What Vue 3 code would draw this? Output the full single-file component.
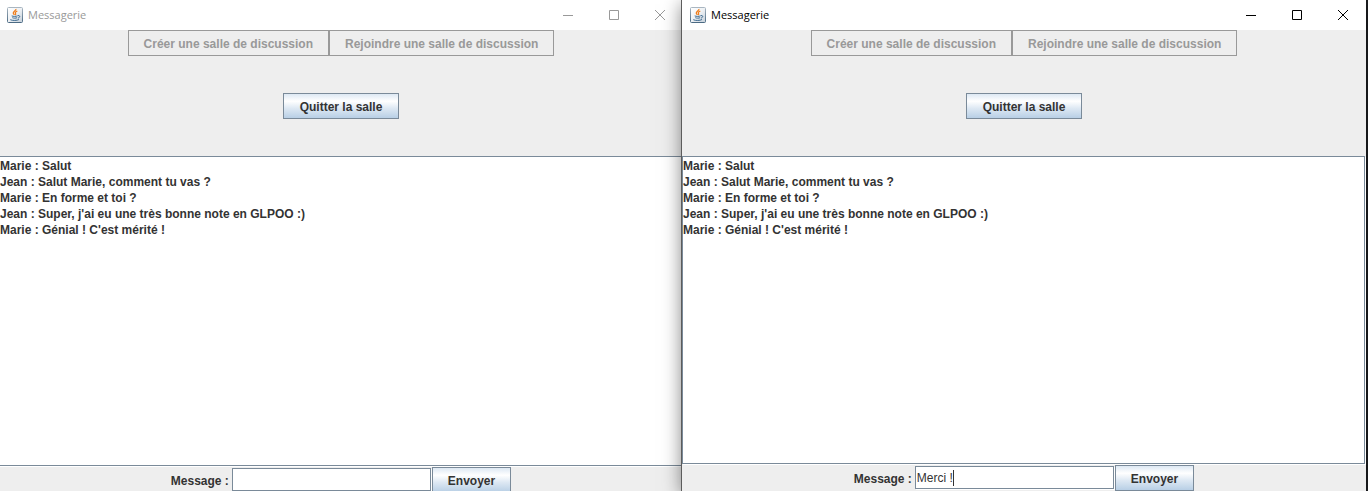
<script setup>
import { reactive } from 'vue'

const messages = [
  'Marie : Salut',
  'Jean : Salut Marie, comment tu vas ?',
  'Marie : En forme et toi ?',
  "Jean : Super, j'ai eu une très bonne note en GLPOO :)",
  "Marie : Génial ! C'est mérité !",
]

const windows = reactive([
  { id: 'jean', active: false, draft: '' },
  { id: 'marie', active: true, draft: 'Merci !' },
])
</script>

<template>
  <main class="desktop">
    <section
      v-for="w in windows"
      :key="w.id"
      class="window"
      :class="w.active ? 'active' : 'inactive'"
    >
      <header class="titlebar">
        <svg class="logo" viewBox="0 0 16 16" aria-hidden="true">
          <defs>
            <linearGradient :id="'tile-' + w.id" x1="0" y1="0" x2="1" y2="1">
              <stop offset="0" stop-color="#ffffff" />
              <stop offset="0.5" stop-color="#eef1f4" />
              <stop offset="1" stop-color="#c3ced8" />
            </linearGradient>
            <linearGradient :id="'edge-' + w.id" x1="0" y1="0" x2="0" y2="1">
              <stop offset="0" stop-color="#a9b6c1" />
              <stop offset="1" stop-color="#4b6a83" />
            </linearGradient>
          </defs>
          <rect x="0.5" y="0.5" width="15" height="15" rx="1" :fill="`url(#tile-${w.id})`" :stroke="`url(#edge-${w.id})`" />
          <path d="M8.900 2c.6 1.600-3 2.500-2.600 4.200.1.700 1 1.200 1 1.900M10.300 4.200c-1.500.5-2.400 1.200-1.800 2.200.5.700.2 1.300-.3 1.700" fill="none" stroke="#f07d1a" stroke-width="1.300" />
          <path d="M4.700 8.900c1.500.700 4.500.600 5.800 0M5.300 10.700c1.300.6 3.600.6 4.800 0M3.300 12.700c2.200 1.100 6.700 1 8.700-.2M10.700 8.600c2.700-.6 2.700 1.900.2 2.500" fill="none" stroke="#3f6b90" stroke-width="1" />
        </svg>
        <h1>Messagerie</h1>
        <div class="controls">
          <button type="button" aria-label="Réduire">
            <svg viewBox="0 0 10 10"><path d="M0 5.500h10" /></svg>
          </button>
          <button type="button" aria-label="Agrandir">
            <svg viewBox="0 0 10 10"><path d="M.5.5h9v9h-9z" /></svg>
          </button>
          <button type="button" aria-label="Fermer">
            <svg viewBox="0 0 10 10"><path d="M0 0l10 10M10 0L0 10" /></svg>
          </button>
        </div>
      </header>

      <div class="row">
        <button type="button" class="btn" disabled>Créer une salle de discussion</button>
        <button type="button" class="btn" disabled>Rejoindre une salle de discussion</button>
      </div>
      <div class="row">
        <button type="button" class="btn wide">Quitter la salle</button>
      </div>

      <ul class="chat">
        <li v-for="m in messages" :key="m">{{ m }}</li>
      </ul>

      <form class="composer" @submit.prevent>
        <label :for="'msg-' + w.id">Message :</label>
        <span class="field">
          <input :id="'msg-' + w.id" v-model="w.draft" type="text" autocomplete="off" />
          <i v-if="w.active" class="caret"></i>
        </span>
        <button type="submit" class="btn">Envoyer</button>
      </form>
    </section>
  </main>
</template>

<style>
body {
  margin: 0;
  background: #1e1f22;
}
</style>

<style scoped>
.desktop {
  display: grid;
  grid-template-columns: 1fr 1fr;
  height: 100vh;
  padding-right: 2px;
  overflow: hidden;
  box-sizing: border-box;
  font: bold 12px/16px "Liberation Sans", Arial, sans-serif;
  color: #333;
}
.window {
  display: flex;
  flex-direction: column;
  min-height: 100vh;
  box-sizing: border-box;
  background: #eee;
}
.inactive {
  margin: 0 0 -2px -1px;
}
.active {
  position: relative;
  margin-left: -1px;
  box-shadow: -1px 0 0 #5c5c5c, 0 4px 18px rgba(0, 0, 0, 0.5);
}
.titlebar {
  display: flex;
  align-items: center;
  height: 30px;
  padding-left: 8px;
  box-sizing: border-box;
  background: #fff;
  color: #000;
}
.inactive .titlebar {
  color: #999;
}
.logo {
  width: 16px;
  height: 16px;
  margin-right: 5px;
}
.titlebar .logo {
  margin-bottom: 1px;
}
h1 {
  margin: 0;
  flex: 1;
  font: 11px/16px "Open Sans", "Noto Sans", sans-serif;
}
.controls {
  display: flex;
}
.controls button {
  display: flex;
  align-items: center;
  justify-content: center;
  width: 46px;
  height: 28px;
  padding: 0;
  border: 0;
  background: none;
  color: inherit;
}
.controls svg {
  width: 10px;
  height: 10px;
  fill: none;
  stroke: currentColor;
}
.row {
  display: flex;
  justify-content: center;
  align-items: flex-start;
  height: 63px;
}
.btn {
  height: 26px;
  padding: 2px 15px 0;
  border: 1px solid #7a8a99;
  border-radius: 0;
  background: linear-gradient(#dde8f3, #fff 30%, #dde8f3 60%, #b8cfe5);
  color: #333;
  font: inherit;
  white-space: nowrap;
}
.btn.wide {
  padding-inline: 16px;
}
.btn:disabled {
  border-color: #999;
  background: #eee;
  color: #999;
}
.chat {
  flex: 1;
  margin: 0;
  padding: 1px 0 0;
  list-style: none;
  background: #fff;
  border: 1px solid #7a8a99;
  box-shadow: 0 1px 0 #fff;
}
.active .chat {
  margin-right: 1px;
  box-shadow: 1px 1px 0 #fff;
}
.composer {
  display: flex;
  justify-content: center;
  align-items: flex-start;
  margin-top: 1px;
}
.composer label {
  padding-top: 6px;
  margin-right: 3px;
}
.field {
  position: relative;
  display: flex;
  margin: 1px 1px 0 0;
}
.field input {
  width: 199px;
  height: 23px;
  box-sizing: border-box;
  padding: 0 1px;
  border: 1px solid #7a8a99;
  border-radius: 0;
  outline: 0;
  background: #fff;
  box-shadow: 1px 1px 0 #fff;
  color: #333;
  font: 12px/16px "Liberation Sans", Arial, sans-serif;
}
.caret {
  position: absolute;
  left: 38px;
  top: 4px;
  width: 1px;
  height: 16px;
  background: #333;
}
</style>
